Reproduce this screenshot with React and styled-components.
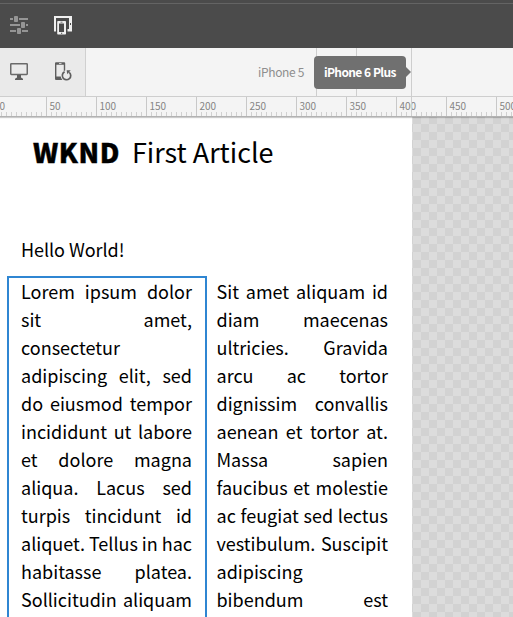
import React from "react";
import styled, { createGlobalStyle } from "styled-components";

const GlobalStyle = createGlobalStyle`
  * { box-sizing: border-box; }
  body { margin: 0; overflow: hidden; }
`;

const Editor = styled.div`
  width: 513px;
  height: 617px;
  display: flex;
  flex-direction: column;
  overflow: hidden;
  background: #fff;
  font-family: "Noto Sans CJK SC", "Open Sans", sans-serif;
`;

const HeaderBar = styled.header`
  height: 48px;
  flex: none;
  display: flex;
  align-items: flex-start;
  gap: 24px;
  padding: 12px 0 0 9px;
  background: #4b4b4b;
  border-top: 3px solid #4b4b4b;
  box-shadow: inset 0 1px 0 #646464;
`;

const DeviceBar = styled.div`
  height: 48px;
  flex: none;
  display: flex;
  background: #f4f4f4;
`;

const DeviceTools = styled.div`
  width: 86px;
  display: flex;
  gap: 24px;
  padding: 14px 0 0 9px;
  background: #eaeaea;
  border-right: 1px solid #d0d0d0;
`;

const Breakpoints = styled.div`
  position: relative;
  z-index: 2;
  flex: 1;
  display: flex;
  align-items: center;
  padding-left: 172px;
  gap: 10px;
`;

const Guide = styled.i`
  position: absolute;
  top: 0;
  left: ${(p) => p.$x}px;
  width: 1px;
  height: ${(p) => p.$h || 48}px;
  background: #cecece;
`;

const DeviceName = styled.span`
  position: relative;
  width: 46px;
  color: #8e8e8e;
  font-size: 12px;
  letter-spacing: -0.35px;
  line-height: 20px;
  white-space: nowrap;
`;

const ActiveDevice = styled.span`
  position: relative;
  width: 92px;
  height: 33px;
  padding-left: 10px;
  border-radius: 4px;
  background: #707070;
  color: #fff;
  font-size: 12px;
  font-weight: 700;
  letter-spacing: -0.65px;
  word-spacing: 0.4px;
  line-height: 32px;
  white-space: nowrap;
  &::after {
    content: "";
    position: absolute;
    left: 92px;
    top: 11px;
    border: 5px solid transparent;
    border-left-color: #707070;
    border-right: 0;
  }
`;

const Ruler = styled.div`
  height: 21px;
  flex: none;
  display: flex;
  margin-left: -4px;
  width: 560px;
  border-top: 1px solid #cecece;
  border-bottom: 1px solid #b2b2b2;
  box-shadow: 0 1px 1px rgba(0, 0, 0, 0.2);
  background: #f4f4f4;
  z-index: 1;
`;

const RulerStep = styled.span`
  width: 50px;
  flex: none;
  height: 19px;
  padding-left: 2.5px;
  border-left: 1px solid #c8c8c8;
  background: repeating-linear-gradient(90deg, transparent 0 4px, #d0d0d0 4px 5px) 0 100% / 49px 4px no-repeat;
  color: #858585;
  font-size: 10px;
  letter-spacing: -0.1px;
  line-height: 17px;
`;

const Workspace = styled.main`
  flex: 1;
  min-height: 0;
  display: flex;
  background: repeating-conic-gradient(#d2d2d2 0 25%, #dcdcdc 0 50%) 5px -1px / 16px 16px;
`;

const Page = styled.article`
  width: 412px;
  background: #fff;
  color: #000;
  padding: 0 0 0 7px;
`;

const Title = styled.h1`
  height: 72px;
  margin: 0;
  padding-left: 26px;
  display: flex;
  gap: 12px;
  font-size: 27px;
  font-weight: 400;
  letter-spacing: -0.03px;
  line-height: 70px;
  white-space: nowrap;
`;

const Brand = styled.b`
  width: 87px;
  font-weight: 900;
  letter-spacing: 0.6px;
  -webkit-text-stroke: 0.4px #000;
`;

const Greeting = styled.p`
  margin: 46px 0 13px 14px;
  font-size: 18px;
  letter-spacing: -0.05px;
  line-height: 28px;
`;

const Columns = styled.div`
  display: flex;
`;

const TextColumn = styled.section`
  width: ${(p) => (p.$selected ? 200 : 183)}px;
  height: 360px;
  padding: ${(p) => (p.$selected ? "0 13px 0 12px" : "2px 2px 0 9.5px")};
  border: ${(p) => (p.$selected ? "2px solid #2f86d2" : "0")};
  font-size: 18px;
  line-height: 28px;
`;

const Line = styled.div`
  position: relative;
  top: -1px;
  height: 28px;
  display: flex;
  justify-content: ${(p) => (p.$single ? "flex-start" : "space-between")};
  white-space: nowrap;
`;

const left = ["Lorem ipsum dolor", "sit amet,", "consectetur", "adipiscing elit, sed", "do eiusmod tempor", "incididunt ut labore", "et dolore magna", "aliqua. Lacus sed", "turpis tincidunt id", "aliquet. Tellus in hac", "habitasse platea.", "Sollicitudin aliquam"];
const right = ["Sit amet aliquam id", "diam maecenas", "ultricies. Gravida", "arcu ac tortor", "dignissim convallis", "aenean et tortor at.", "Massa sapien", "faucibus et molestie", "ac feugiat sed lectus", "vestibulum. Suscipit", "adipiscing", "bibendum est"];

function Paragraph({ lines }) {
  return lines.map((line) => {
    const words = line.split(" ");
    return (
      <Line key={line} $single={words.length === 1}>
        {words.map((w, i) => <span key={i}>{w}</span>)}
      </Line>
    );
  });
}

const Icon = styled.svg`
  display: block;
  width: 20px;
  height: 20px;
  flex: none;
`;

export default function App() {
  return (
    <Editor>
      <GlobalStyle />
      <HeaderBar>
        <Icon viewBox="0 0 20 20" fill="#959595">
          <path d="M1 3h3v2H1zM10 3h9v2h-9zM1 9h10v2H1zM17 9h2v2h-2zM1 15h6v2H1zM13 15h6v2h-6z" />
          <rect x="5" y="1" width="4" height="6" rx="0.8" />
          <rect x="12" y="7" width="4" height="6" rx="0.8" />
          <rect x="8" y="13" width="4" height="6" rx="0.8" />
        </Icon>
        <Icon viewBox="0 0 20 20">
          <path d="M1 1h18v15.5h-4.5V14H16V3H3v13.5H1z" fill="#f0f0f0" />
          <rect x="17" y="8" width="1" height="2" fill="#4b4b4b" />
          <path fillRule="evenodd" d="M5 6h7.2a.8.8 0 0 1 .8.8v12a.8.8 0 0 1-.8.8H5a.8.8 0 0 1-.8-.8v-12A.8.8 0 0 1 5 6zM6 8.5V17h5V8.5z" fill="#f0f0f0" />
          <path d="M7.5 6.8h2v.8h-2zM8 17.8h1.2v1H8z" fill="#4b4b4b" />
        </Icon>
      </HeaderBar>
      <DeviceBar>
        <DeviceTools>
          <Icon viewBox="0 0 20 20">
            <rect x="1.75" y="1.75" width="16.5" height="10.7" rx="0.6" fill="none" stroke="#6a6a6a" strokeWidth="1.5" />
            <path d="M8 13h4v2.5l2 1.2V18H6v-1.3l2-1.2z" fill="#5e5e5e" />
          </Icon>
          <Icon viewBox="0 0 20 20">
            <path fillRule="evenodd" d="M3 .3h8.2a1 1 0 0 1 1 1V8.6a5.6 5.6 0 0 0-1.4.7V2.8H3.4v11.8h4.4a5.6 5.6 0 0 0 1.6 3.4H3a1 1 0 0 1-1-1V1.3a1 1 0 0 1 1-1z" fill="#5e5e5e" />
            <path d="M6 1.1h2.5v.8H6z" fill="#eaeaea" />
            <path d="M11.6 9.8a4.2 4.2 0 1 0 4.6.5" fill="none" stroke="#5e5e5e" strokeWidth="1.7" />
            <path d="M13.6 8.3h4.1L14.3 12.2z" fill="#5e5e5e" />
          </Icon>
        </DeviceTools>
        <Breakpoints>
          <Guide $x={230} />
          <Guide $x={270} />
          <Guide $x={325} $h={68} />
          <DeviceName>iPhone 5</DeviceName>
          <ActiveDevice>iPhone 6 Plus</ActiveDevice>
        </Breakpoints>
      </DeviceBar>
      <Ruler>
        {[0, 50, 100, 150, 200, 250, 300, 350, 400, 450, 500].map((n) => <RulerStep key={n}>{n}</RulerStep>)}
      </Ruler>
      <Workspace>
        <Page>
          <Title><Brand>WKND</Brand><span>First Article</span></Title>
          <Greeting>Hello World!</Greeting>
          <Columns>
            <TextColumn $selected><Paragraph lines={left} /></TextColumn>
            <TextColumn><Paragraph lines={right} /></TextColumn>
          </Columns>
        </Page>
      </Workspace>
    </Editor>
  );
}
